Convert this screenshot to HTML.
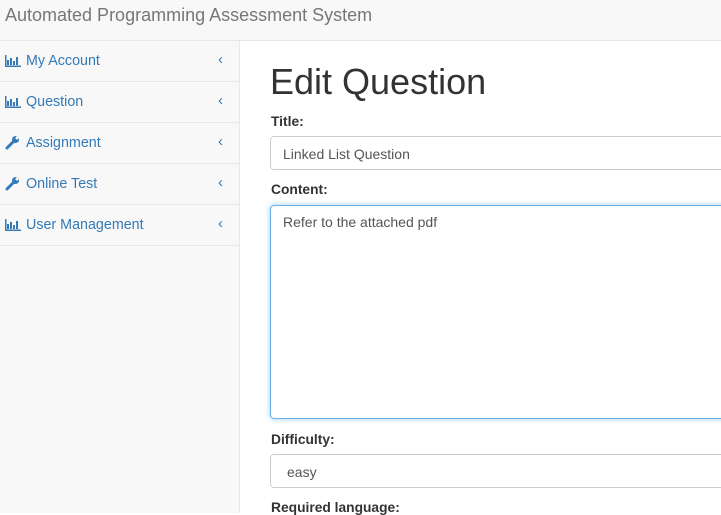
<!DOCTYPE html><html><head><style>
body{margin:0;width:721px;height:513px;overflow:hidden;font-family:"Liberation Sans",sans-serif;font-size:14px;color:#333;background:#fff;position:relative}
.hdr{position:absolute;left:0;top:0;width:721px;height:40px;background:#f8f8f8;border-bottom:1px solid #e7e7e7}
.hdr span{position:absolute;left:5px;top:5px;font-size:18px;color:#777}
.side{position:absolute;left:0;top:41px;width:239px;height:472px;background:#f8f8f8;border-right:1px solid #e7e7e7}
.it{height:40px;border-bottom:1px solid #e7e7e7;position:relative;color:#337ab7}
.it .t{position:absolute;left:26px;top:12px;font-size:14.3px}
.it .c{position:absolute;left:218px;top:10px;font-size:15px}
.it svg{position:absolute;left:5px;top:14px}
.lbl{position:absolute;left:271px;font-weight:bold;font-size:13.8px}
.inp{position:absolute;left:270px;width:460px;border:1px solid #ccc;border-radius:4px;box-sizing:border-box}
.inp span{position:absolute;left:12px;top:9px;color:#555}
</style></head><body>
<div class="hdr"><span>Automated Programming Assessment System</span></div>
<div class="side">
<div class="it"><svg width="16" height="12"><path d="M0.5 0v11.5H16M3 5v5M6 3v7M9 6v4M12 2v8" stroke="#337ab7" stroke-width="2" fill="none"/></svg><span class="t">My Account</span><span class="c">‹</span></div>
<div class="it"><svg width="16" height="12"><path d="M0.5 0v11.5H16M3 5v5M6 3v7M9 6v4M12 2v8" stroke="#337ab7" stroke-width="2" fill="none"/></svg><span class="t">Question</span><span class="c">‹</span></div>
<div class="it"><svg width="16" height="14" style="top:13px"><path d="M2 12L8 6" stroke="#337ab7" stroke-width="3" stroke-linecap="round"/><circle cx="10.5" cy="3.5" r="3.5" fill="#337ab7"/><circle cx="12" cy="2" r="1.5" fill="#f8f8f8"/></svg><span class="t">Assignment</span><span class="c">‹</span></div>
<div class="it"><svg width="16" height="14" style="top:13px"><path d="M2 12L8 6" stroke="#337ab7" stroke-width="3" stroke-linecap="round"/><circle cx="10.5" cy="3.5" r="3.5" fill="#337ab7"/><circle cx="12" cy="2" r="1.5" fill="#f8f8f8"/></svg><span class="t">Online Test</span><span class="c">‹</span></div>
<div class="it"><svg width="16" height="12"><path d="M0.5 0v11.5H16M3 5v5M6 3v7M9 6v4M12 2v8" stroke="#337ab7" stroke-width="2" fill="none"/></svg><span class="t">User Management</span><span class="c">‹</span></div>
</div>
<div style="position:absolute;left:270px;top:61px;font-size:36px;color:#333">Edit Question</div>
<div class="lbl" style="top:114px">Title:</div>
<div class="inp" style="top:136px;height:34px"><span>Linked List Question</span></div>
<div class="lbl" style="top:182px">Content:</div>
<div class="inp" style="top:205px;height:214px;border-color:#66afe9;box-shadow:0 0 6px rgba(102,175,233,.6)"><span style="top:8px">Refer to the attached pdf</span></div>
<div class="lbl" style="top:432px">Difficulty:</div>
<div class="inp" style="top:454px;height:34px"><span style="left:16px">easy</span></div>
<div class="lbl" style="top:500px">Required language:</div>
</body></html>
